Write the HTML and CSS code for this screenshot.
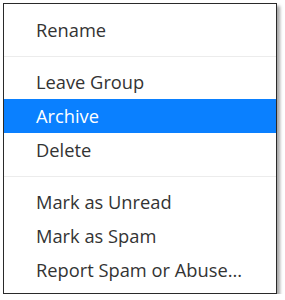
FILE: index.html
```html
<!DOCTYPE html>
<html>
<head>
<meta charset="utf-8">
<link rel="stylesheet" href="styles.css">
</head>
<body>
<div class="menu">
  <div class="item">Rename</div>
  <div class="sep"></div>
  <div class="item">Leave Group</div>
  <div class="item active">Archive</div>
  <div class="item">Delete</div>
  <div class="sep"></div>
  <div class="item">Mark as Unread</div>
  <div class="item">Mark as Spam</div>
  <div class="item">Report Spam or Abuse...</div>
</div>
</body>
</html>
```
FILE: styles.css
```css
html, body {
  margin: 0;
  padding: 0;
  background: #fff;
}
.menu {
  margin: 3px 0 0 3px;
  width: 274px;
  height: 291px;
  box-sizing: border-box;
  border: 1px solid #2a2a2a;
  box-shadow: 3px 3px 3px rgba(0,0,0,0.35);
  padding-top: 9px;
  font-family: "Open Sans", "Noto Sans", sans-serif;
  font-size: 18.3px;
  color: #333;
  background: #fff;
}
.item {
  height: 34px;
  line-height: 34px;
  padding-left: 32px;
  white-space: nowrap;
}
.item.active {
  background: #0a80ff;
  color: #fff;
}
.sep {
  height: 18px;
  display: flex;
  align-items: center;
}
.sep::before {
  content: "";
  display: block;
  width: 100%;
  height: 1px;
  background: #ececec;
}
```
